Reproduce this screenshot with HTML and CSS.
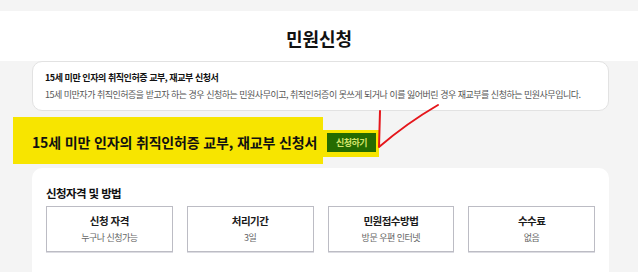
FILE: index.html
```html
<!DOCTYPE html>
<html lang="ko">
<head>
<meta charset="utf-8">
<title>민원신청</title>
<link rel="stylesheet" href="styles.css">
</head>
<body>
<header class="page-head">
  <h1 class="page-title">민원신청</h1>
</header>
<main class="wrap">
  <section class="intro">
    <p class="intro-title">15세 미만 인자의 취직인허증 교부, 재교부 신청서</p>
    <p class="intro-desc">15세 미만자가 취직인허증을 받고자 하는 경우 신청하는 민원사무이고, 취직인허증이 못쓰게 되거나 이를 잃어버린 경우 재교부를 신청하는 민원사무입니다.</p>
  </section>
  <div class="title-row">
    <div class="hl"><h2 class="form-title">15세 미만 인자의 취직인허증 교부, 재교부 신청서</h2></div>
    <div class="btn-hl"><button class="apply-btn" type="button">신청하기</button></div>
    <svg class="mark" width="70" height="50" viewBox="0 0 70 50" aria-hidden="true">
      <path d="M3 8 L2 44 Q30 20 61 2" fill="none" stroke="#e5161b" stroke-width="2" stroke-linecap="round" stroke-linejoin="round"/>
    </svg>
  </div>
  <section class="method">
    <h3 class="method-title">신청자격 및 방법</h3>
    <div class="grid">
      <div class="box"><strong class="box-title">신청 자격</strong><span class="box-val">누구나 신청가능</span></div>
      <div class="box"><strong class="box-title">처리기간</strong><span class="box-val">3일</span></div>
      <div class="box"><strong class="box-title">민원접수방법</strong><span class="box-val">방문 우편 인터넷</span></div>
      <div class="box"><strong class="box-title">수수료</strong><span class="box-val">없음</span></div>
    </div>
  </section>
</main>
</body>
</html>
```
FILE: styles.css
```css
* { box-sizing: border-box; }
html, body { margin: 0; padding: 0; }
body {
  background: #f4f4f4;
  font-family: "Noto Sans CJK KR", "Noto Sans", sans-serif;
  color: #111;
  height: 272px;
  overflow: hidden;
}
.page-head {
  margin-top: 11px;
  height: 50px;
  background: #fff;
  display: flex;
  align-items: center;
  justify-content: center;
}
.page-title {
  margin: 0;
  font-size: 18px;
  font-weight: 700;
  line-height: 22px;
  letter-spacing: 0;
  padding-top: 4px;
}
.wrap {
  width: 577px;
  margin-left: 32px;
}
.intro {
  background: #fff;
  border: 1px solid #e2e2e2;
  border-radius: 10px;
  height: 50px;
  padding: 8px 12px 0;
}
.intro p { margin: 0; white-space: nowrap; }
.intro-title {
  font-size: 9px;
  font-weight: 700;
  line-height: 16px;
  letter-spacing: -0.45px;
  color: #111;
}
.intro-desc {
  font-size: 9px;
  line-height: 17px;
  letter-spacing: -0.5px;
  color: #555;
}
.title-row {
  position: relative;
  display: flex;
  margin: 6px 0 0 -19px;
  height: 47px;
}
.hl {
  background: #f7e500;
  width: 310px;
  display: flex;
  align-items: center;
  padding: 3px 0 0 19px;
}
.form-title {
  margin: 0;
  font-size: 14px;
  font-weight: 700;
  letter-spacing: -0.15px;
  white-space: nowrap;
  color: #111;
}
.btn-hl {
  align-self: flex-start;
  margin-top: 13px;
  background: #f7e500;
  padding: 3px 3px 5px 4px;
}
.apply-btn {
  display: block;
  width: 49px;
  height: 19px;
  padding: 0;
  border: 0;
  background: #256b00;
  color: #d3e46a;
  font-family: inherit;
  font-size: 9px;
  font-weight: 700;
  letter-spacing: -0.5px;
  line-height: 19px;
}
.mark {
  position: absolute;
  left: 364px;
  top: -14px;
}
.method {
  margin-top: 4px;
  background: #fff;
  border-radius: 10px 10px 0 0;
  height: 104px;
  padding: 16px 14px 0;
}
.method-title {
  margin: 0;
  font-size: 11.5px;
  font-weight: 700;
  line-height: 18px;
  letter-spacing: -0.6px;
  color: #111;
}
.grid {
  margin-top: 4px;
  display: grid;
  grid-template-columns: repeat(4, 1fr);
  gap: 14px;
}
.box {
  height: 46px;
  border: 1px solid #bcbcc4;
  box-shadow: 0 1px 0 #dcdce2;
  display: flex;
  flex-direction: column;
  align-items: center;
  padding-top: 7px;
}
.box-title {
  font-size: 10.5px;
  font-weight: 700;
  line-height: 14px;
  letter-spacing: -0.5px;
  color: #1a1a1a;
}
.box-val {
  margin-top: 3px;
  font-size: 9px;
  line-height: 14px;
  letter-spacing: -0.5px;
  color: #666;
}
```
